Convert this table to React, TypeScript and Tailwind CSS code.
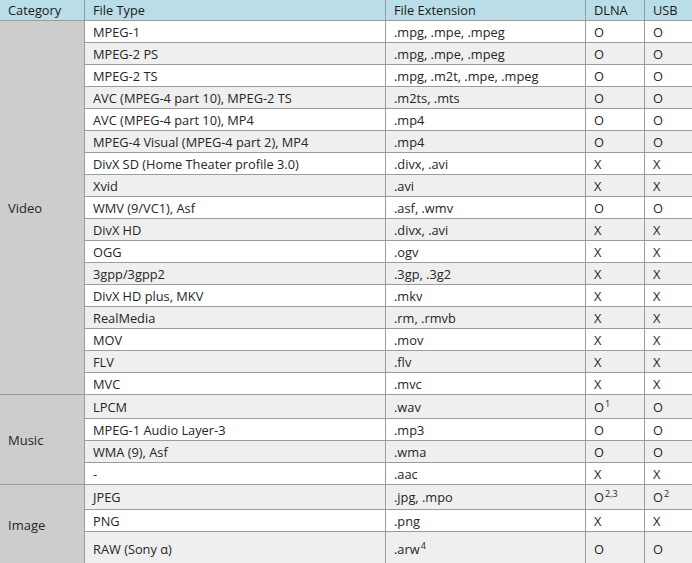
import React from 'react';

type Row = { type: string; ext: React.ReactNode; dlna: React.ReactNode; usb: React.ReactNode; h?: string };

const sup = (s: string) => <sup className="text-[9px] relative -top-[5px] ml-px">{s}</sup>;

const groups: { category: string; rows: Row[] }[] = [
    {
        category: 'Video',
        rows: [
            { type: 'MPEG-1', ext: '.mpg, .mpe, .mpeg', dlna: 'O', usb: 'O' },
            { type: 'MPEG-2 PS', ext: '.mpg, .mpe, .mpeg', dlna: 'O', usb: 'O' },
            { type: 'MPEG-2 TS', ext: '.mpg, .m2t, .mpe, .mpeg', dlna: 'O', usb: 'O' },
            { type: 'AVC (MPEG-4 part 10), MPEG-2 TS', ext: '.m2ts, .mts', dlna: 'O', usb: 'O' },
            { type: 'AVC (MPEG-4 part 10), MP4', ext: '.mp4', dlna: 'O', usb: 'O' },
            { type: 'MPEG-4 Visual (MPEG-4 part 2), MP4', ext: '.mp4', dlna: 'O', usb: 'O' },
            { type: 'DivX SD (Home Theater profile 3.0)', ext: '.divx, .avi', dlna: 'X', usb: 'X' },
            { type: 'Xvid', ext: '.avi', dlna: 'X', usb: 'X' },
            { type: 'WMV (9/VC1), Asf', ext: '.asf, .wmv', dlna: 'O', usb: 'O' },
            { type: 'DivX HD', ext: '.divx, .avi', dlna: 'X', usb: 'X' },
            { type: 'OGG', ext: '.ogv', dlna: 'X', usb: 'X' },
            { type: '3gpp/3gpp2', ext: '.3gp, .3g2', dlna: 'X', usb: 'X' },
            { type: 'DivX HD plus, MKV', ext: '.mkv', dlna: 'X', usb: 'X' },
            { type: 'RealMedia', ext: '.rm, .rmvb', dlna: 'X', usb: 'X' },
            { type: 'MOV', ext: '.mov', dlna: 'X', usb: 'X' },
            { type: 'FLV', ext: '.flv', dlna: 'X', usb: 'X' },
            { type: 'MVC', ext: '.mvc', dlna: 'X', usb: 'X' },
        ],
    },
    {
        category: 'Music',
        rows: [
            { type: 'LPCM', ext: '.wav', dlna: <>O{sup('1')}</>, usb: 'O', h: 'h-[24px]' },
            { type: 'MPEG-1 Audio Layer-3', ext: '.mp3', dlna: 'O', usb: 'O' },
            { type: 'WMA (9), Asf', ext: '.wma', dlna: 'O', usb: 'O' },
            { type: '-', ext: '.aac', dlna: 'X', usb: 'X' },
        ],
    },
    {
        category: 'Image',
        rows: [
            { type: 'JPEG', ext: '.jpg, .mpo', dlna: <>O{sup('2,3')}</>, usb: <>O{sup('2')}</>, h: 'h-[25px]' },
            { type: 'PNG', ext: '.png', dlna: 'X', usb: 'X' },
            { type: 'RAW (Sony α)', ext: <>.arw{sup('4')}</>, dlna: 'O', usb: 'O', h: 'h-[34px]' },
        ],
    },
];

export default function App() {
    let idx = 0;
    const border = 'border border-[#9c9c9c] px-[8px] py-0 leading-[20px] text-left align-middle';

    return (
        <div className="w-[692px] h-[563px] overflow-hidden bg-white" style={{ fontFamily: '"Open Sans", "Liberation Sans", sans-serif' }}>
            <table className="w-[694px] -ml-px -mt-px border-collapse table-fixed text-[12.8px] text-[#262626]">
                <colgroup>
                    <col className="w-[85px]" />
                    <col className="w-[301px]" />
                    <col className="w-[200px]" />
                    <col className="w-[59px]" />
                    <col className="w-[49px]" />
                </colgroup>
                <thead>
                    {/* 헤더 */}
                    <tr className="bg-[#b9dde9] text-[12.8px] text-[#1a1a1a] h-[21px]">
                        <th className={`${border} font-medium`}>Category</th>
                        <th className={`${border} font-medium`}>File Type</th>
                        <th className={`${border} font-medium`}>File Extension</th>
                        <th className={`${border} font-medium`}>DLNA</th>
                        <th className={`${border} font-medium`}>USB</th>
                    </tr>
                </thead>
                <tbody>
                    {groups.map(group =>
                        group.rows.map((row, i) => {
                            const stripe = idx++ % 2 === 1 ? 'bg-[#efefef]' : 'bg-white';
                            return (
                                <tr key={group.category + i} className={`${stripe} ${row.h ?? 'h-[22px]'}`}>
                                    {i === 0 && (
                                        <td rowSpan={group.rows.length} className={`${border} bg-[#cdcdcd] text-[13px]`}>
                                            {group.category}
                                        </td>
                                    )}
                                    <td className={border}>{row.type}</td>
                                    <td className={border}>{row.ext}</td>
                                    <td className={border}>{row.dlna}</td>
                                    <td className={border}>{row.usb}</td>
                                </tr>
                            );
                        })
                    )}
                </tbody>
            </table>
        </div>
    );
}
